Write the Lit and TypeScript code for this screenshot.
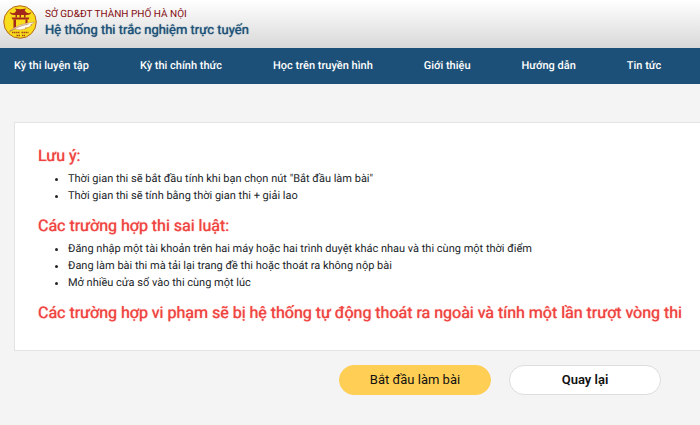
import { LitElement, html, css, svg } from "lit";
import { customElement } from "lit/decorators.js";

const NAV = [
  "Kỳ thi luyện tập",
  "Kỳ thi chính thức",
  "Học trên truyền hình",
  "Giới thiệu",
  "Hướng dẫn",
  "Tin tức",
];

const NOTES = [
  'Thời gian thi sẽ bắt đầu tính khi bạn chọn nút "Bắt đầu làm bài"',
  "Thời gian thi sẽ tính bằng thời gian thi + giải lao",
];

const VIOLATIONS = [
  "Đăng nhập một tài khoản trên hai máy hoặc hai trình duyệt khác nhau và thi cùng một thời điểm",
  "Đang làm bài thi mà tải lại trang đề thi hoặc thoát ra không nộp bài",
  "Mở nhiều cửa sổ vào thi cùng một lúc",
];

@customElement("site-emblem")
export class SiteEmblem extends LitElement {
  static styles = css`
    :host { display: block; flex: none; width: 34px; height: 34px; }
    svg { display: block; width: 100%; height: 100%; }
  `;

  render() {
    return html`<svg viewBox="0 0 68 68" aria-hidden="true">
      ${svg`
        <circle cx="34" cy="34" r="32.5" fill="#f9dc1c" stroke="#b5651d" stroke-width="2"/>
        <g fill="#a3271b">
          <path d="M24 7 Q34 10 46 7 L43 12 H27 Z"/>
          <path d="M13 14 Q19 18 24 15 L27 11 H43 L47 15 Q52 18 57 14 Q55 20 48 20 H22 Q15 20 13 14 Z"/>
          <path d="M25 20h3v5h-3zM33 20h3v5h-3zM42 20h3v5h-3z"/>
          <path d="M17 25 H53 L51 29 H19 Z"/>
          <path d="M21 29h5v18h-5zM45 29h4v8h-4z"/>
        </g>
        <path d="M14 52 Q28 38 63 34 Q60 38 55 40 L58 40 Q52 46 44 46 L47 47 Q34 52 24 48 Z" fill="#fffdf2" stroke="#b97a4a" stroke-width="1"/>
        <path d="M11 55 Q26 43 51 38" fill="none" stroke="#a8653d" stroke-width="1.2"/>
        <path d="M18 55h15M37 55h14M27 61h8M38 61h6" stroke="#a3471b" stroke-width="3" stroke-dasharray="3 1"/>
      `}
    </svg>`;
  }
}

@customElement("app-root")
export class AppRoot extends LitElement {
  static styles = css`
    :host {
      display: block;
      min-height: 100vh;
      background: #f4f4f4;
      color: #212529;
      font-family: Roboto, "Noto Sans", sans-serif;
      font-size: 11px;
      line-height: 17px;
      text-rendering: geometricPrecision;
    }
    * { box-sizing: border-box; }
    .header {
      display: flex;
      align-items: center;
      gap: 8px;
      height: 48px;
      padding: 0 3px 4px;
      background: linear-gradient(#fff, #d8d8d8);
    }
    .dept { margin-top: 4px; font-size: 10px; line-height: 14px; color: #840c10; }
    .system { margin: 0; font-size: 13px; line-height: 18px; font-weight: 400; color: #1c5078; text-shadow: 0 0 1px currentColor; }
    .nav {
      display: flex;
      gap: 51px;
      padding: 9px 14px;
      background: #1c5078;
      white-space: nowrap;
      overflow: hidden;
      line-height: 18px;
    }
    .nav a { color: #fff; font-weight: 500; text-decoration: none; }
    .card {
      margin: 38px 0 0 14px;
      padding: 23px 8px 27px 23px;
      background: #fff;
      border: 1px solid #e3e3e3;
      border-right: 0;
    }
    .title { margin: 0; font-size: 16px; line-height: 20px; font-weight: 400; color: #f04442; text-shadow: 0 0 1px currentColor; }
    .list { margin: 4px 0 12px; padding: 0 0 0 30px; }
    .actions {
      display: flex;
      justify-content: flex-end;
      gap: 18px;
      padding: 14px 39px 30px;
    }
    .btn {
      width: 152px;
      height: 30px;
      padding: 0;
      border: 1px solid #ddd;
      border-radius: 15px;
      background: #fff;
      color: #111;
      font: 600 13px/18px Roboto, "Noto Sans", sans-serif;
    }
    .primary { background: #ffce54; border-color: #ffce54; font-weight: 400; }
  `;

  render() {
    return html`
      <header class="header">
        <site-emblem></site-emblem>
        <div>
          <div class="dept">SỞ GD&amp;ĐT THÀNH PHỐ HÀ NỘI</div>
          <h1 class="system">Hệ thống thi trắc nghiệm trực tuyến</h1>
        </div>
      </header>
      <nav class="nav">${NAV.map((item) => html`<a href="#">${item}</a>`)}</nav>
      <main>
        <section class="card">
          <h2 class="title">Lưu ý:</h2>
          <ul class="list">${NOTES.map((note) => html`<li>${note}</li>`)}</ul>
          <h2 class="title">Các trường hợp thi sai luật:</h2>
          <ul class="list">${VIOLATIONS.map((rule) => html`<li>${rule}</li>`)}</ul>
          <h2 class="title">Các trường hợp vi phạm sẽ bị hệ thống tự động thoát ra ngoài và tính một lần trượt vòng thi</h2>
        </section>
        <div class="actions">
          <button class="btn primary" type="button">Bắt đầu làm bài</button>
          <button class="btn" type="button">Quay lại</button>
        </div>
      </main>
    `;
  }
}
